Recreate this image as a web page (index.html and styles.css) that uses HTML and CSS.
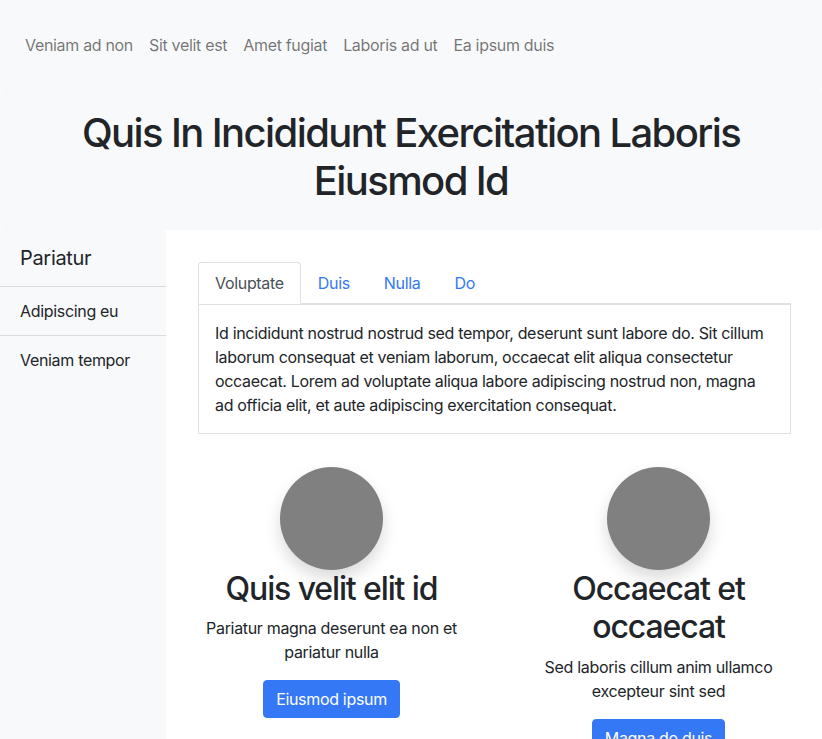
FILE: index.html
```html
<!DOCTYPE html>
<html lang="la">
<head>
<meta charset="utf-8">
<title>Quis In Incididunt</title>
<link rel="stylesheet" href="styles.css">
</head>
<body>
<nav class="navbar">
  <a class="nav-link" href="#">Veniam ad non</a>
  <a class="nav-link" href="#">Sit velit est</a>
  <a class="nav-link" href="#">Amet fugiat</a>
  <a class="nav-link" href="#">Laboris ad ut</a>
  <a class="nav-link" href="#">Ea ipsum duis</a>
</nav>
<header class="hero">
  <h1 class="hero-title">Quis In Incididunt Exercitation Laboris Eiusmod Id</h1>
</header>
<div class="layout">
  <aside class="sidebar">
    <div class="side-item side-head">Pariatur</div>
    <div class="side-item">Adipiscing eu</div>
    <div class="side-item side-last">Veniam tempor</div>
  </aside>
  <main class="main">
    <ul class="tabs">
      <li class="tab active">Voluptate</li>
      <li class="tab">Duis</li>
      <li class="tab">Nulla</li>
      <li class="tab">Do</li>
    </ul>
    <div class="tab-body">Id incididunt nostrud nostrud sed tempor, deserunt sunt labore do. Sit cillum laborum consequat et veniam laborum, occaecat elit aliqua consectetur occaecat. Lorem ad voluptate aliqua labore adipiscing nostrud non, magna ad officia elit, et aute adipiscing exercitation consequat.</div>
    <div class="cards">
      <div class="card">
        <div class="avatar"></div>
        <h2 class="card-title">Quis velit elit id</h2>
        <p class="card-text">Pariatur magna deserunt ea non et pariatur nulla</p>
        <a class="btn" href="#">Eiusmod ipsum</a>
      </div>
      <div class="card">
        <div class="avatar"></div>
        <h2 class="card-title">Occaecat et occaecat</h2>
        <p class="card-text">Sed laboris cillum anim ullamco excepteur sint sed</p>
        <a class="btn" href="#">Magna do duis</a>
      </div>
    </div>
  </main>
</div>
</body>
</html>
```
FILE: styles.css
```css
* { box-sizing: border-box; }
html, body { margin: 0; padding: 0; }
body {
  font-family: Inter, "Noto Sans", "Liberation Sans", sans-serif;
  font-size: 16px;
  line-height: 24px;
  letter-spacing: -0.02em;
  color: #212529;
  background: #ffffff;
  overflow-x: hidden;
}
.navbar {
  display: flex;
  background: #f8f9fa;
  padding: 25px 17px 24px;
  height: 89px;
}
.nav-link {
  display: block;
  padding: 8px;
  color: rgba(0,0,0,0.55);
  text-decoration: none;
}
.hero {
  background: #f8f9fa;
  border-radius: 4px;
  padding: 20px 24px 25px;
  text-align: center;
}
.hero-title {
  margin: 0;
  font-size: 40px;
  line-height: 48px;
  font-weight: 500;
  letter-spacing: -0.04em;
}
.layout {
  display: flex;
}
.sidebar {
  width: 166px;
  flex: 0 0 166px;
  background: #f8f9fa;
  border-top-right-radius: 4px;
  min-height: 520px;
}
.side-item {
  padding: 12px 20px;
  border-bottom: 1px solid #d9dadc;
}
.side-head {
  font-size: 20px;
  padding: 16px 20px;
}
.side-last { border-bottom: 0; }
.main {
  flex: 1;
  padding: 32px 31px 32px 32px;
  min-width: 0;
}
.tabs {
  display: flex;
  list-style: none;
  margin: 0;
  padding: 0;
  border-bottom: 1px solid #dee2e6;
}
.tab {
  padding: 8px 16px;
  border: 1px solid transparent;
  border-radius: 4px 4px 0 0;
  margin-bottom: -1px;
  color: #3478f6;
}
.tab.active {
  color: #495057;
  background: #fff;
  border-color: #dee2e6 #dee2e6 #fff;
}
.tab-body {
  border: 1px solid #dee2e6;
  padding: 16px;
}
.cards {
  display: grid;
  grid-template-columns: 327px 327px;
  margin-left: -30px;
  margin-top: 33px;
}
.card {
  padding: 0 16px;
  text-align: center;
}
.avatar {
  width: 103px;
  height: 103px;
  border-radius: 50%;
  background: #808080;
  margin: 0 auto;
  box-shadow: 0 8px 16px rgba(0,0,0,0.15);
}
.card-title {
  margin: 0 0 8px;
  font-size: 32px;
  line-height: 38.4px;
  font-weight: 500;
  letter-spacing: -0.035em;
}
.card-text {
  margin: 0 0 16px;
}
.btn {
  display: inline-block;
  padding: 6px 12px;
  background: #3478f6;
  color: #fff;
  text-decoration: none;
  border-radius: 4px;
  line-height: 24px;
  border: 1px solid #3478f6;
}
```
